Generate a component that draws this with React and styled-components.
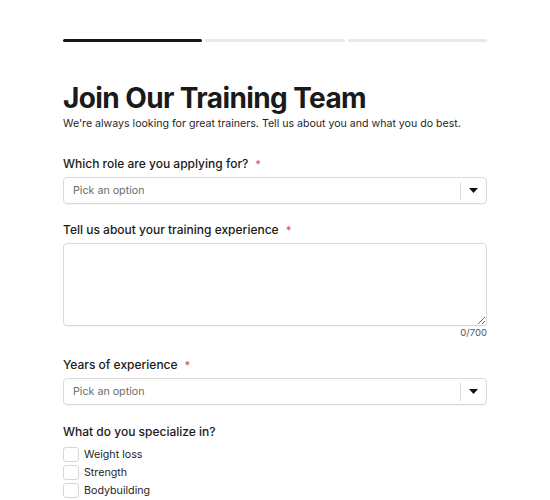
import styled, { createGlobalStyle } from "styled-components";

const GlobalStyle = createGlobalStyle`
  body {
    margin: 0;
    background: #fff;
    font-family: Inter, "Noto Sans", sans-serif;
    color: #1a1a1a;
  }
`;

const Page = styled.div`
  width: 424px;
  padding-top: 39px;
  margin-left: 63px;
`;

const Progress = styled.div`
  display: grid;
  grid-template-columns: 1fr 1fr 1fr;
  gap: 3px;
`;

const Step = styled.div`
  height: 3px;
  border-radius: 2px;
  background: ${p => (p.done ? "#151515" : "#e8e8e8")};
`;

const Title = styled.h1`
  margin: 40px 0 0;
  font-size: 28px;
  line-height: 33px;
  font-weight: 700;
  letter-spacing: -0.6px;
  color: #1a1a1a;
`;

const Subtitle = styled.p`
  margin: 1px 0 0;
  font-size: 10.6px;
  line-height: 16px;
  color: #1f1f1f;
  white-space: nowrap;
`;

const Field = styled.div`
  margin-top: ${p => p.gap || 18}px;
`;

const Label = styled.div`
  font-size: 12px;
  font-weight: 500;
  line-height: 16px;
  margin-bottom: ${p => p.space || 5}px;
  color: #1a1a1a;
  display: flex;
  align-items: center;
`;

const Star = styled.span`
  color: #ec3f78;
  margin-left: 7px;
  font-size: 11px;
  line-height: 12px;
`;

const Select = styled.div`
  box-sizing: border-box;
  height: 27px;
  border: 1px solid #dadada;
  border-radius: 4px;
  display: flex;
  align-items: center;
  box-shadow: 0 1px 1px rgba(0, 0, 0, 0.04);
`;

const Placeholder = styled.div`
  flex: 1;
  padding-left: 9px;
  font-size: 10.7px;
  color: #6b6b6b;
`;

const Caret = styled.div`
  width: 25px;
  height: 18px;
  border-left: 1px solid #dadada;
  display: flex;
  align-items: center;
  justify-content: center;
`;

const TextArea = styled.textarea`
  display: block;
  box-sizing: border-box;
  width: 100%;
  height: 83px;
  margin: 0;
  border: 1px solid #dadada;
  border-radius: 4px;
  box-shadow: 0 1px 1px rgba(0, 0, 0, 0.04);
  font-family: inherit;
  resize: vertical;
  outline: none;
`;

const Counter = styled.div`
  text-align: right;
  font-size: 9.5px;
  line-height: 12px;
  color: #555;
  margin-top: 1px;
`;

const Options = styled.div`
  display: flex;
  flex-direction: column;
  gap: 3px;
`;

const Option = styled.label`
  display: flex;
  align-items: center;
  gap: 5px;
  font-size: 10.7px;
  line-height: 15px;
  color: #1f1f1f;
`;

const Box = styled.span`
  box-sizing: border-box;
  width: 16px;
  height: 15px;
  border: 1px solid #d6d6d6;
  border-radius: 3px;
  background: #fff;
`;

function Dropdown() {
  return (
    <Select>
      <Placeholder>Pick an option</Placeholder>
      <Caret>
        <svg width="9" height="5" viewBox="0 0 9 5">
          <path d="M0 0h9L4.5 5z" fill="#111" />
        </svg>
      </Caret>
    </Select>
  );
}

export default function App() {
  return (
    <>
      <GlobalStyle />
      <Page>
        <Progress>
          <Step done />
          <Step />
          <Step />
        </Progress>
        <Title>Join Our Training Team</Title>
        <Subtitle>We're always looking for great trainers. Tell us about you and what you do best.</Subtitle>

        <Field gap={24}>
          <Label>Which role are you applying for?<Star>*</Star></Label>
          <Dropdown />
        </Field>

        <Field>
          <Label>Tell us about your training experience<Star>*</Star></Label>
          <TextArea />
          <Counter>0/700</Counter>
        </Field>

        <Field>
          <Label>Years of experience<Star>*</Star></Label>
          <Dropdown />
        </Field>

        <Field gap={19}>
          <Label space={7}>What do you specialize in?</Label>
          <Options>
            {["Weight loss", "Strength", "Bodybuilding"].map(o => (
              <Option key={o}><Box />{o}</Option>
            ))}
          </Options>
        </Field>
      </Page>
    </>
  );
}
